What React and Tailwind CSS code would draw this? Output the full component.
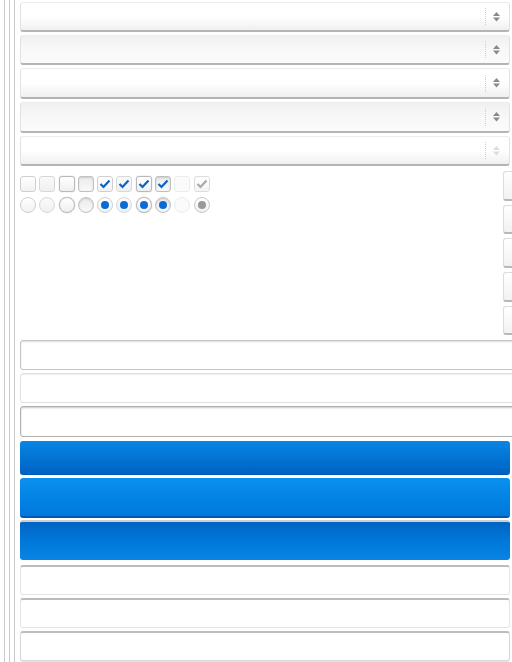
import React from "react";

function Arrow({ disabled }) {
  const c = disabled ? "#dddddd" : "#8a8a8a";
  return (
    <svg width="7" height="10" viewBox="0 0 7 10" className="block">
      <path d="M3.5 0 L7 4 L0 4 Z" fill={c} />
      <path d="M0 5.5 L7 5.5 L3.5 9.5 Z" fill={c} />
    </svg>
  );
}

function Select({ variant, disabled, h = "h-[30px]" }) {
  const bg =
    variant === "a"
      ? "bg-gradient-to-b from-white via-white to-[#f0f0f0]"
      : "bg-gradient-to-b from-[#f0f0f0] via-[#f8f8f8] to-[#fbfbfb]";
  return (
    <div
      className={`${h} w-[490px] rounded-[3px] border border-t-[#ececec] border-x-[#e2e2e2] border-b-[#b4b4b4] border-b-2 ${bg} flex items-center justify-end`}
    >
      <div className="h-[17px] border-l border-dotted border-l-[#cfcfcf] mr-[7px]" />
      <div className="w-[7px] flex justify-center mr-[9px]">
        <Arrow disabled={disabled} />
      </div>
    </div>
  );
}

function Check({ color }) {
  return (
    <svg width="12" height="10" viewBox="0 0 12 10" className="block">
      <path d="M1.5 5 L4.5 8 L10.5 1.5" fill="none" stroke={color} strokeWidth="2.2" />
    </svg>
  );
}

const boxStyles = [
  "border-[#cfcfcf] bg-gradient-to-b from-white to-[#f2f2f2]",
  "border-[#d8d8d8] bg-gradient-to-b from-[#fafafa] to-[#f0f0f0]",
  "border-[#b8b8b8] bg-gradient-to-b from-white to-[#efefef] shadow-[0_0_1px_#999]",
  "border-[#c0c0c0] bg-gradient-to-b from-[#ececec] to-[#f8f8f8] shadow-[inset_0_1px_2px_#ccc]",
];

function Checkbox({ i }) {
  if (i < 4) return <div className={`w-[16px] h-[16px] rounded-[3px] border ${boxStyles[i]}`} />;
  if (i < 8)
    return (
      <div className={`w-[16px] h-[16px] rounded-[3px] border ${boxStyles[i - 4]} flex items-center justify-center`}>
        <Check color="#0a62c8" />
      </div>
    );
  if (i === 8) return <div className="w-[16px] h-[16px] rounded-[3px] border border-[#ececec] bg-[#fbfbfb]" />;
  return (
    <div className="w-[16px] h-[16px] rounded-[3px] border border-[#dcdcdc] bg-gradient-to-b from-white to-[#f4f4f4] flex items-center justify-center">
      <Check color="#a8a8a8" />
    </div>
  );
}

function Radio({ i }) {
  if (i < 4) return <div className={`w-[16px] h-[16px] rounded-full border ${boxStyles[i]}`} />;
  if (i < 8)
    return (
      <div className={`w-[16px] h-[16px] rounded-full border ${boxStyles[i - 4]} flex items-center justify-center`}>
        <div className="w-[8px] h-[8px] rounded-full bg-[#0a6ad6]" />
      </div>
    );
  if (i === 8) return <div className="w-[16px] h-[16px] rounded-full border border-[#ececec] bg-[#fbfbfb]" />;
  return (
    <div className="w-[16px] h-[16px] rounded-full border border-[#c8c8c8] bg-gradient-to-b from-white to-[#f0f0f0] flex items-center justify-center">
      <div className="w-[8px] h-[8px] rounded-full bg-[#999999]" />
    </div>
  );
}

function SideButton({ mt, h = "h-[30px]" }) {
  return (
    <div
      className={`${mt} ${h} w-[20px] rounded-l-[3px] border border-r-0 border-[#dcdcdc] border-b-[#b8b8b8] border-b-2 bg-gradient-to-b from-white to-[#f2f2f2]`}
    />
  );
}

export default function App() {
  const idx = [0, 1, 2, 3, 4, 5, 6, 7, 8, 9];
  return (
    <div className="w-[512px] h-[662px] bg-white overflow-hidden flex" style={{ fontFamily: "'Liberation Sans', sans-serif" }}>
      <div className="w-[4px] shrink-0" />
      <div className="w-[1px] shrink-0 bg-[#cacaca]" />
      <div className="w-[4px] shrink-0" />
      <div className="w-[1px] shrink-0 bg-[#cacaca]" />
      <div className="w-[4px] shrink-0" />
      <div className="w-[1px] shrink-0 bg-[#cacaca]" />
      <div className="w-[5px] shrink-0" />
      <div className="flex flex-col w-[492px] shrink-0 pt-[2px]">
        <Select variant="a" />
        <div className="h-[3px]" />
        <Select variant="b" />
        <div className="h-[3px]" />
        <Select variant="a" h="h-[31px]" />
        <div className="h-[3px]" />
        <Select variant="b" h="h-[31px]" />
        <div className="h-[3px]" />
        <Select variant="a" disabled />

        <div className="flex">
          <div className="flex flex-col pt-[10px] w-[483px] shrink-0">
            <div className="flex gap-[3.3px]">
              {idx.map((i) => (
                <Checkbox key={i} i={i} />
              ))}
            </div>
            <div className="flex gap-[3.3px] mt-[5px]">
              {idx.map((i) => (
                <Radio key={i} i={i} />
              ))}
            </div>
          </div>
          <div className="flex flex-col shrink-0">
            <SideButton mt="mt-[5px]" />
            <SideButton mt="mt-[4px]" h="h-[29px]" />
            <SideButton mt="mt-[4px]" />
            <SideButton mt="mt-[4px]" />
            <SideButton mt="mt-[4px]" h="h-[29px]" />
          </div>
        </div>

        <div className="mt-[5px] h-[30px] w-[500px] shrink-0 rounded-[3px] border border-[#c4c4c4] shadow-[inset_0_1px_2px_#dcdcdc]" />
        <div className="mt-[3px] h-[30px] w-[500px] shrink-0 rounded-[3px] border border-[#e0e0e0] shadow-[inset_0_1px_1px_#eeeeee]" />
        <div className="mt-[3px] h-[31px] w-[500px] shrink-0 rounded-[3px] border border-[#b0b0b0] shadow-[inset_0_1px_2px_#c8c8c8]" />

        <div className="mt-[4px] h-[34px] w-[490px] rounded-[3px] bg-gradient-to-b from-[#0a86e6] to-[#0062c2] border-b border-b-[#0058b0]" />
        <div className="mt-[3px] h-[40px] w-[490px] rounded-[3px] bg-gradient-to-b from-[#0b90ee] to-[#0078dc] border-b-2 border-b-[#0058b0]" />
        <div className="mt-[2px] h-[40px] w-[490px] rounded-[3px] bg-gradient-to-b from-[#0064c4] via-[#0078da] to-[#0a84e4] border-t-2 border-t-[#cfcfcf]" />

        <div className="mt-[5px] h-[30px] w-[490px] rounded-[3px] border border-[#e4e4e4] border-t-2 border-t-[#bcbcbc]" />
        <div className="mt-[3px] h-[30px] w-[490px] rounded-[3px] border border-[#e4e4e4] border-t-2 border-t-[#bcbcbc]" />
        <div className="mt-[3px] h-[30px] w-[490px] rounded-[3px] border border-[#d8d8d8] border-t-2 border-t-[#bcbcbc] shadow-[0_1px_1px_#e0e0e0]" />
      </div>
    </div>
  );
}
